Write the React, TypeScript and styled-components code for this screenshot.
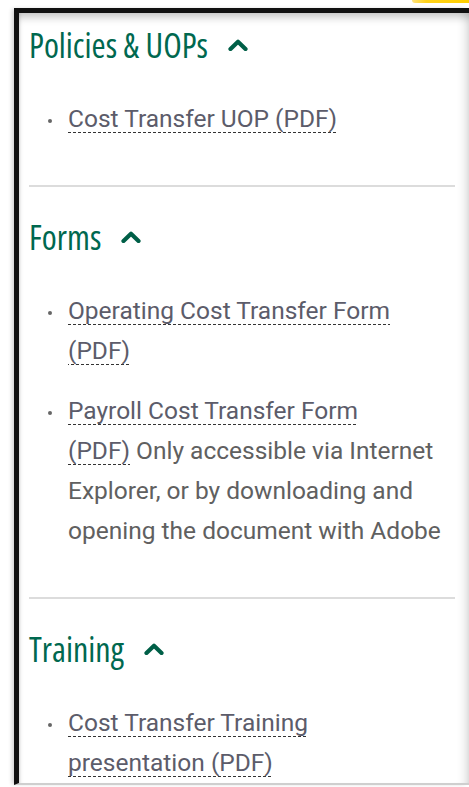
import styled, { createGlobalStyle } from "styled-components";

const GlobalStyle = createGlobalStyle`
  html, body {
    margin: 0;
    padding: 0;
    background: #fff;
  }
  body {
    font-family: Roboto, "Liberation Sans", sans-serif;
  }
`;

const Page = styled.div`
  width: 469px;
  height: 787px;
  padding-left: 14px;
  box-sizing: border-box;
  overflow: hidden;
`;

const TopStrip = styled.div`
  height: 8px;
  display: flex;
  justify-content: flex-end;
`;

const GoldTab = styled.div`
  width: 57px;
  height: 3px;
  background: linear-gradient(90deg, #ffe27a 0%, #ffd21a 25%, #ffcf00 100%);
  border-radius: 0 0 0 3px;
`;

const Frame = styled.div`
  height: 777px;
  box-sizing: border-box;
  border-top: 5px solid #111;
  border-left: 5px solid #111;
  border-bottom: 2px solid #cfcfcf;
  padding: 12px 14px 0 10px;
  overflow: hidden;
  background: #fff;
  box-shadow: inset 0 8px 8px -4px rgba(0, 0, 0, 0.24),
    inset -12px 0 10px -8px rgba(0, 0, 0, 0.12),
    inset 3px 0 3px -2px rgba(0, 0, 0, 0.12),
    -3px 0 4px -1px rgba(0, 0, 0, 0.18);
`;

const Section = styled.section<{ $first?: boolean }>`
  padding: ${(p) => (p.$first ? "0" : "30px")} 0 46px;
  border-bottom: 2px solid #dcdcdc;

  &:last-child {
    border-bottom: none;
  }
`;

const Heading = styled.h2`
  margin: 0;
  display: flex;
  align-items: center;
  gap: 20px;
  font-family: "Open Sans", "Roboto", sans-serif;
  font-stretch: 80%;
  font-weight: 500;
  font-size: 34px;
  line-height: 40px;
  color: #00684f;
`;

const Chevron = () => (
  <svg width="20" height="12" viewBox="0 0 20 12" aria-hidden="true">
    <polyline
      points="2.5,10 10,2.8 17.5,10"
      fill="none"
      stroke="#005f47"
      strokeWidth="4.2"
      strokeLinecap="round"
      strokeLinejoin="round"
    />
  </svg>
);

const List = styled.ul`
  list-style: none;
  margin: 34px 0 0;
  padding: 0;
  display: flex;
  flex-direction: column;
  gap: 20px;
`;

const Item = styled.li`
  display: flex;
  align-items: flex-start;
  font-size: 24.5px;
  line-height: 40px;
  color: #606060;
`;

const Dot = styled.span`
  flex: none;
  width: 4px;
  height: 4px;
  border-radius: 50%;
  background: #666;
  margin: 20px 16px 0 19px;
`;

const Text = styled.div`
  max-width: 378px;
`;

const DocLink = styled.a`
  color: #5c5c6a;
  text-decoration: none;
  background-image: linear-gradient(90deg, #333 60%, transparent 60%);
  background-size: 5px 1.5px;
  background-repeat: repeat-x;
  background-position: 0 100%;
`;

export default function App() {
  return (
    <>
      <GlobalStyle />
      <Page>
        <TopStrip>
          <GoldTab />
        </TopStrip>
        <Frame>
          <Section $first>
            <Heading>
              Policies &amp; UOPs <Chevron />
            </Heading>
            <List>
              <Item>
                <Dot />
                <Text>
                  <DocLink href="#">Cost Transfer UOP (PDF)</DocLink>
                </Text>
              </Item>
            </List>
          </Section>
          <Section>
            <Heading>
              Forms <Chevron />
            </Heading>
            <List>
              <Item>
                <Dot />
                <Text>
                  <DocLink href="#">Operating Cost Transfer Form (PDF)</DocLink>
                </Text>
              </Item>
              <Item>
                <Dot />
                <Text>
                  <DocLink href="#">Payroll Cost Transfer Form (PDF)</DocLink>
                  {"\u00a0"}Only accessible via Internet Explorer, or by
                  downloading and opening the document with Adobe
                </Text>
              </Item>
            </List>
          </Section>
          <Section>
            <Heading>
              Training <Chevron />
            </Heading>
            <List>
              <Item>
                <Dot />
                <Text>
                  <DocLink href="#">Cost Transfer Training presentation (PDF)</DocLink>
                </Text>
              </Item>
            </List>
          </Section>
        </Frame>
      </Page>
    </>
  );
}
